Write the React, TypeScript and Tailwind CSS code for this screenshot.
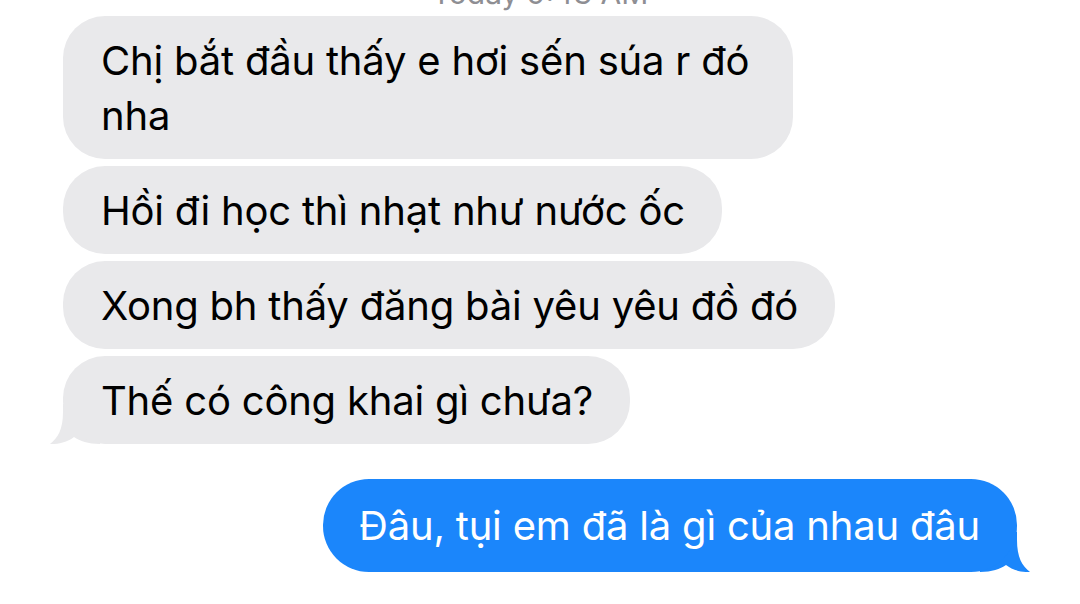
import React from "react";

const font = { fontFamily: "Inter, 'Noto Sans', 'Liberation Sans', sans-serif" };

function Gray({ children, tail = false, className = "" }: { children: React.ReactNode; tail?: boolean; className?: string }) {
  return (
    <div className={"relative self-start " + className}>
      <div className="relative z-10 rounded-[42px] bg-[#e9e9eb] pl-[38px] pr-[37px] py-[16.5px] text-[40px] leading-[55px] text-black tracking-[-0.2px]">
        {children}
      </div>
      {tail && (
        <svg className="absolute left-[-13px] bottom-0 z-0" width="50" height="40" viewBox="0 0 50 40">
          <path d="M13 0 L13 8 C13 25 8 34 0 40 C 10 40.5 18 37.5 24 33 C 30 37 38 40 50 40 L50 0 Z" fill="#e9e9eb" />
        </svg>
      )}
    </div>
  );
}

export default function App() {
  return (
    <div className="w-[1080px] h-[604px] bg-white overflow-hidden relative" style={font}>
      <div className="absolute left-0 right-0 top-[-29px] text-center text-[30px] text-[#8e8e93]">
        Today 9:43 AM
      </div>
      <div className="flex flex-col gap-[7px] pl-[63px] pt-[16px]">
        <Gray className="w-[730px]">Chị bắt đầu thấy e hơi sến súa r đó nha</Gray>
        <Gray>Hồi đi học thì nhạt như nước ốc</Gray>
        <Gray>Xong bh thấy đăng bài yêu yêu đồ đó</Gray>
        <Gray tail>Thế có công khai gì chưa?</Gray>
      </div>
      <div className="flex justify-end pr-[63px] mt-[35px]">
        <div className="relative">
          <div className="relative z-10 rounded-[46px] bg-[#1b86fb] pl-[36px] pr-[37px] py-[19px] text-[40px] leading-[55px] text-white tracking-[-0.2px]">
            Đâu, tụi em đã là gì của nhau đâu
          </div>
          <svg className="absolute right-[-13px] bottom-0 z-0" width="50" height="40" viewBox="0 0 50 40">
            <path d="M37 0 L37 8 C37 25 42 34 50 40 C 40 40.5 32 37.5 26 33 C 20 37 12 40 0 40 L0 0 Z" fill="#1b86fb" />
          </svg>
        </div>
      </div>
    </div>
  );
}
